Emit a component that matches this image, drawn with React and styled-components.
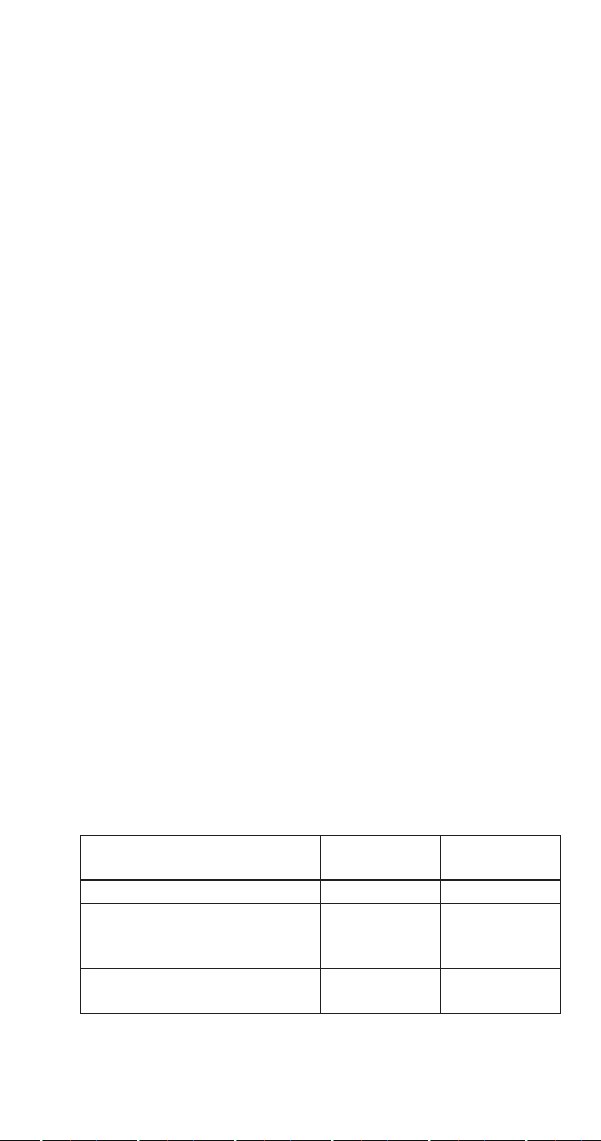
import styled, { createGlobalStyle } from "styled-components"

const GlobalStyle = createGlobalStyle`
  html, body {
    margin: 0;
    padding: 0;
    background: #fff;
  }
  body {
    font-family: "Liberation Sans", Arial, sans-serif;
    color: #231f20;
  }
`

const rows = [
  { height: 24 },
  { height: 65 },
  { height: 45 },
]

const App = () => {
  return (
    <>
      <GlobalStyle />
      <StPage>
        <StTable>
          <colgroup>
            <col style={{ width: 240 }} />
            <col style={{ width: 120 }} />
            <col style={{ width: 120 }} />
          </colgroup>
          <thead>
            <StHeadRow>
              <StHeadCell />
              <StHeadCell />
              <StHeadCell />
            </StHeadRow>
          </thead>
          <tbody>
            {rows.map((row, i) => (
              <StRow key={i} $height={row.height}>
                <StCell />
                <StCell />
                <StCell />
              </StRow>
            ))}
          </tbody>
        </StTable>
        <StScanLine />
      </StPage>
    </>
  )
}

//-----styled-components-----

// 페이지
const StPage = styled.div`
  height: 1141px;
  padding: 835px 0 0 80px;
  box-sizing: border-box;
  display: flex;
  flex-direction: column;
`

// 표
const StTable = styled.table`
  border-collapse: collapse;
  table-layout: fixed;
  width: 481px;
  border: 1px solid #231f20;
`

// 헤더 행
const StHeadRow = styled.tr`
  height: 44px;
  border-bottom: 2px solid #231f20;
`

const StHeadCell = styled.th`
  border: 1px solid #231f20;
  border-bottom: 2px solid #231f20;
  padding: 0;
`

// 본문 행
const StRow = styled.tr`
  height: ${(p) => p.$height}px;
`

const StCell = styled.td`
  border: 1px solid #231f20;
  padding: 0;
`

// 하단 줄
const StScanLine = styled.div`
  margin-top: auto;
  margin-left: -80px;
  width: 601px;
  height: 1px;
  background: repeating-linear-gradient(
    90deg,
    #111 0 40px,
    #fff 40px 42px,
    #2a6 42px 43px,
    #111 43px 70px,
    #d33 70px 71px,
    #111 71px 96px,
    #36f 96px 97px
  );
`

export default App
